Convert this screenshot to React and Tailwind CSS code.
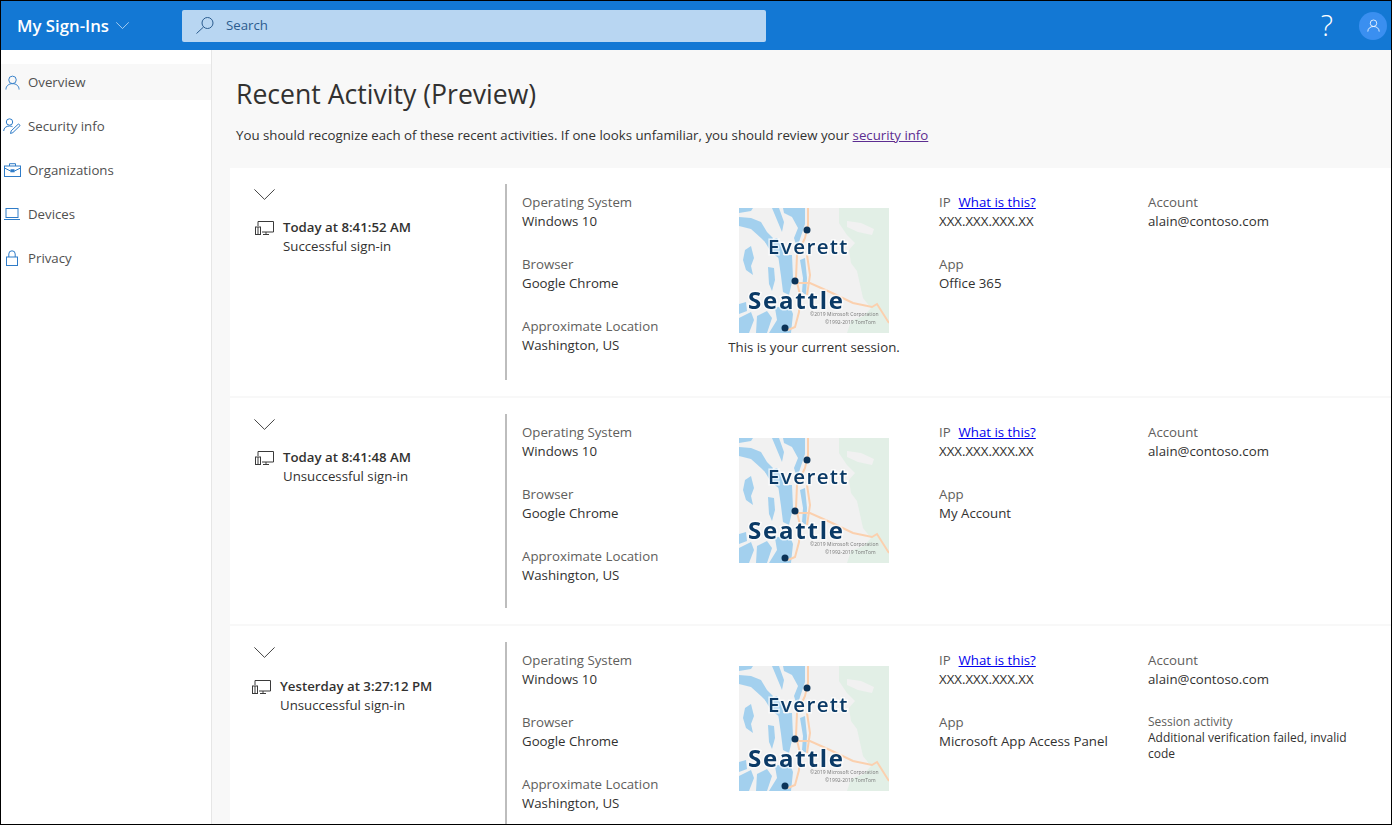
import React from "react";

const FONT = "font-['Open_Sans','Noto_Sans',sans-serif]";

const PersonIcon = ({ className = "" }) => (
  <svg viewBox="0 0 16 16" className={className} fill="none" stroke="currentColor" strokeWidth="1">
    <circle cx="8" cy="5.2" r="4" />
    <path d="M1 15.5c0-3.8 3-6.3 7-6.3s7 2.5 7 6.3" />
  </svg>
);

const Chevron = ({ className = "" }) => (
  <svg viewBox="0 0 21 11" className={className} fill="none" stroke="currentColor" strokeWidth="1">
    <path d="M.4.4l10.1 10 10.1-10" />
  </svg>
);

const navItems = [
  { label: "Overview", active: true, icon: <PersonIcon className="w-[15px] h-[17px]" /> },
  {
    label: "Security info",
    icon: (
      <svg viewBox="0 0 18 16" className="w-[18px] h-[16px]" fill="none" stroke="currentColor" strokeWidth="1">
        <circle cx="6.5" cy="4" r="3.2" />
        <path d="M.7 13c0-3 2.4-5 5.8-5 1.2 0 2.2.2 3 .7" />
        <path d="M7.5 15.5l.7-2.7 7-6.6c.6-.5 2.2 1 1.7 1.6l-7 6.8z" />
      </svg>
    ),
  },
  {
    label: "Organizations",
    icon: (
      <svg viewBox="0 0 17 14" className="w-[17px] h-[14px]" fill="none" stroke="currentColor" strokeWidth="1">
        <rect x=".5" y="3" width="16" height="10.5" />
        <path d="M5.5 3V.7h6V3M.5 5l6 3h4l6-3" />
        <rect x="7" y="6.8" width="3" height="2" fill="currentColor" />
      </svg>
    ),
  },
  {
    label: "Devices",
    icon: (
      <svg viewBox="0 0 16 12" className="w-[16px] h-[12px]" fill="none" stroke="currentColor" strokeWidth="1">
        <rect x="2" y=".5" width="12" height="9" />
        <path d="M0 11.5h16" />
      </svg>
    ),
  },
  {
    label: "Privacy",
    icon: (
      <svg viewBox="0 0 12 16" className="w-[12px] h-[16px]" fill="none" stroke="currentColor" strokeWidth="1">
        <rect x=".5" y="7" width="11" height="8.5" />
        <path d="M2.8 7V4a3.2 3.2 0 0 1 6.4 0v3" />
      </svg>
    ),
  },
];

const DeviceIcon = () => (
  <svg viewBox="0 0 19 14" className="w-[19px] h-[14px] text-[#3a3a3a]" fill="none" stroke="currentColor" strokeWidth="1">
    <path d="M3 5V.5h15.5v10.5H7" />
    <path d="M8 13.5h6M11 11v2.5" />
    <rect x=".5" y="6" width="5" height="7.5" />
    <path d="M3 6v7.5" />
  </svg>
);

const MapThumb = () => (
  <svg viewBox="0 0 150 125" className="w-[150px] h-[125px] block blur-[0.3px]">
    <rect width="150" height="125" fill="#f1f1f1" />
    {/* green hills */}
    <path d="M100 0H150V125H108L112 113 125 108 132 100 124 90 118 63 112 55 110 42 116 35 108 27 100 15Z" fill="#e2efe6" />
    <path d="M108 13l14 2 13 6-2 6-14-3-11-5z" fill="#f1f1f1" />
    {/* water */}
    <g fill="#a3d0ee">
      <path d="M0 0H14L12 3 0 5Z" />
      <path d="M0 9L12 10 22 14 28 24 34 30 30 38 22 30 12 21 0 18Z" />
      <path d="M33 0H40L45 14 43 24 38 12Z" />
      <path d="M44 0H66V16L62 28 58 40 55 30 59 20 53 9 45 5Z" />
      <path d="M26 34L38 30 46 42 42 52 32 44Z" />
      <path d="M6 42L12 38 15 50 12 58 14 67 7 62 4 52Z" />
      <path d="M39 47H53L54 70 50 87 44 84 42 68Z" />
      <path d="M61 52L66 50 68 70 67 87 63 84 64 70Z" />
      <path d="M29 59L35 60 36 72 33 83 30 76Z" />
      <path d="M0 96L7 94 8 103 0 106Z" />
      <path d="M0 110L12 104 15 112 10 125H0Z" />
      <path d="M18 108L28 103 33 110 28 125H17Z" />
      <path d="M36 100L50 96 54 106 52 125H30L38 112Z" />
    </g>
    {/* roads */}
    <g fill="none" stroke="#fbd0ae" strokeWidth="2">
      <path d="M69 0V17L66 30 58 47 57 70 61 87 60 104 56 119 49 122" />
      <path d="M68 47L71 67 68 87" />
      <path d="M59 75H71L91 84 114 95 133 99 138 96 150 115" />
    </g>
    <text x="29" y="46" fill="#0b3a66" stroke="#ffffff" strokeOpacity=".7" strokeWidth="3" paintOrder="stroke" fontFamily="'Open Sans',sans-serif" fontSize="20.5" fontWeight="600" letterSpacing="1.4">Everett</text>
    <text x="9" y="101" fill="#0b3a66" stroke="#ffffff" strokeOpacity=".7" strokeWidth="3" paintOrder="stroke" fontFamily="'Open Sans',sans-serif" fontSize="24" fontWeight="700" letterSpacing="1.8">Seattle</text>
    <text x="71" y="108" fill="#777777" fontFamily="'Open Sans',sans-serif" fontSize="5">©2019 Microsoft Corporation</text>
    <text x="86" y="116" fill="#777777" fontFamily="'Open Sans',sans-serif" fontSize="5">©1992-2019 TomTom</text>
    <g fill="#0b3358">
      <circle cx="68" cy="22" r="3.5" />
      <circle cx="56" cy="73" r="3.5" />
      <circle cx="46" cy="120" r="3.5" />
    </g>
  </svg>
);

const Field = ({ label, children }) => (
  <div className="mb-[24px] whitespace-nowrap">
    <div className="text-[13.25px] leading-[19px] text-[#605e5c]">{label}</div>
    <div className="text-[13.25px] leading-[19px] text-[#323130]">{children}</div>
  </div>
);

const sessions = [
  { time: "Today at 8:41:52 AM", status: "Successful sign-in", app: "Office 365", current: true, h: "h-[228px]", line: "h-[196px]" },
  { time: "Today at 8:41:48 AM", status: "Unsuccessful sign-in", app: "My Account", h: "h-[226px]", line: "h-[194px]" },
  { time: "Yesterday at 3:27:12 PM", status: "Unsuccessful sign-in", app: "Microsoft App Access Panel", shift: true, failed: true, h: "h-[200px]", line: "h-[184px]" },
];

const SessionCard = ({ s }) => (
  <div className={`bg-white flex pt-[16px] overflow-hidden shrink-0 ${s.h}`}>
    <div className="w-[275px] shrink-0 pl-[24px]">
      <Chevron className="w-[21px] h-[11px] mt-[5px] text-[#444444]" />
      <div className={`flex ${s.shift ? "-ml-[3px] mt-[19px]" : "mt-[18px]"}`}>
        <div className="pt-[3px] pl-[1px]"><DeviceIcon /></div>
        <div className="ml-[9px]">
          <div className="text-[13.25px] leading-[19px] font-semibold text-[#323130]">{s.time}</div>
          <div className="text-[13.25px] leading-[19px] text-[#323130]">{s.status}</div>
        </div>
      </div>
    </div>
    <div className={`w-[2px] bg-[#bdbdbd] shrink-0 ${s.line}`} />
    <div className="w-[222px] shrink-0 pl-[15px] pt-[9px]">
      <Field label="Operating System">Windows 10</Field>
      <Field label="Browser">Google Chrome</Field>
      <Field label="Approximate Location">Washington, US</Field>
    </div>
    <div className="w-[170px] shrink-0 pt-[24px] flex flex-col items-center">
      <MapThumb />
      {s.current && <div className="text-[13.25px] leading-[19px] mt-[5px] text-[#323130] whitespace-nowrap">This is your current session.</div>}
    </div>
    <div className="w-[248px] shrink-0 pl-[40px] pt-[9px]">
      <Field label={<span>IP&nbsp; <a className="ml-[1px] text-[#0000ee] underline">What is this?</a></span>}>XXX.XXX.XXX.XX</Field>
      <Field label="App">{s.app}</Field>
    </div>
    <div className="w-[206px] shrink-0 pt-[9px] pl-[1px]">
      <Field label="Account">alain@contoso.com</Field>
      {s.failed && (
        <div className="mt-[8px]">
          <div className="text-[12px] leading-[17px] text-[#605e5c]">Session activity</div>
          <div className="text-[12px] leading-[16px] text-[#323130]">Additional verification failed, invalid code</div>
        </div>
      )}
    </div>
  </div>
);

export default function App() {
  return (
    <div className={`h-[825px] w-[1392px] border border-black overflow-hidden flex flex-col bg-white ${FONT}`}>
      {/* header */}
      <header className="h-[49px] shrink-0 bg-[#1378d4] flex items-center text-white">
        <div className="w-[181px] shrink-0 pl-[16px] flex items-center">
          <span className="text-[16.8px] font-semibold">My Sign-Ins</span>
          <Chevron className="w-[13px] h-[7px] ml-[7px]" />
        </div>
        <div className="w-[584px] h-[32px] bg-[#b8d6f2] rounded-[2px] flex items-center pl-[14px] text-[#2b5c8f]">
          <svg viewBox="0 0 18 17" className="w-[18px] h-[17px]" fill="none" stroke="currentColor" strokeWidth="1">
            <circle cx="11.5" cy="6" r="5.5" />
            <path d="M7.5 10L.5 16.5" />
          </svg>
          <span className="ml-[12px] text-[13.25px]">Search</span>
        </div>
        <div className="ml-auto flex items-center">
          <span className="text-[29px] font-light leading-none mr-[26px] -mt-[2px]">?</span>
          <div className="w-[28px] h-[28px] rounded-full bg-[#3a8ff0] flex items-center justify-center mr-[4px]">
            <PersonIcon className="w-[13px] h-[13px]" />
          </div>
        </div>
      </header>
      <div className="flex flex-1 min-h-0">
        {/* sidebar */}
        <nav className="w-[211px] shrink-0 border-r border-[#e6e6e6] pt-[14px]">
          {navItems.map((item) => (
            <div key={item.label} className={`h-[36px] mb-[8px] flex items-center text-[13.25px] text-[#505050] ${item.active ? "bg-[#f8f8f8]" : ""}`}>
              <div className="w-[27px] flex justify-center text-[#2f7cc8] shrink-0 pr-[5px]">{item.icon}</div>
              <span className="pt-[2px]">{item.label}</span>
            </div>
          ))}
        </nav>
        {/* main */}
        <main className="flex-1 min-w-0 bg-[#f8f8f8] flex flex-col">
          <div className="pl-[24px] pt-[26px] h-[118px] shrink-0">
            <h1 className="text-[26.6px] leading-[36px] text-[#323130]">Recent Activity (Preview)</h1>
            <p className="mt-[14px] text-[13.25px] leading-[19px] text-[#323130]">
              You should recognize each of these recent activities. If one looks unfamiliar, you should review your{" "}
              <a className="text-[#5c2d91] underline">security info</a>
            </p>
          </div>
          <div className="ml-[18px] flex flex-col gap-[2px]">
            {sessions.map((s) => (
              <SessionCard key={s.time} s={s} />
            ))}
          </div>
        </main>
      </div>
    </div>
  );
}
